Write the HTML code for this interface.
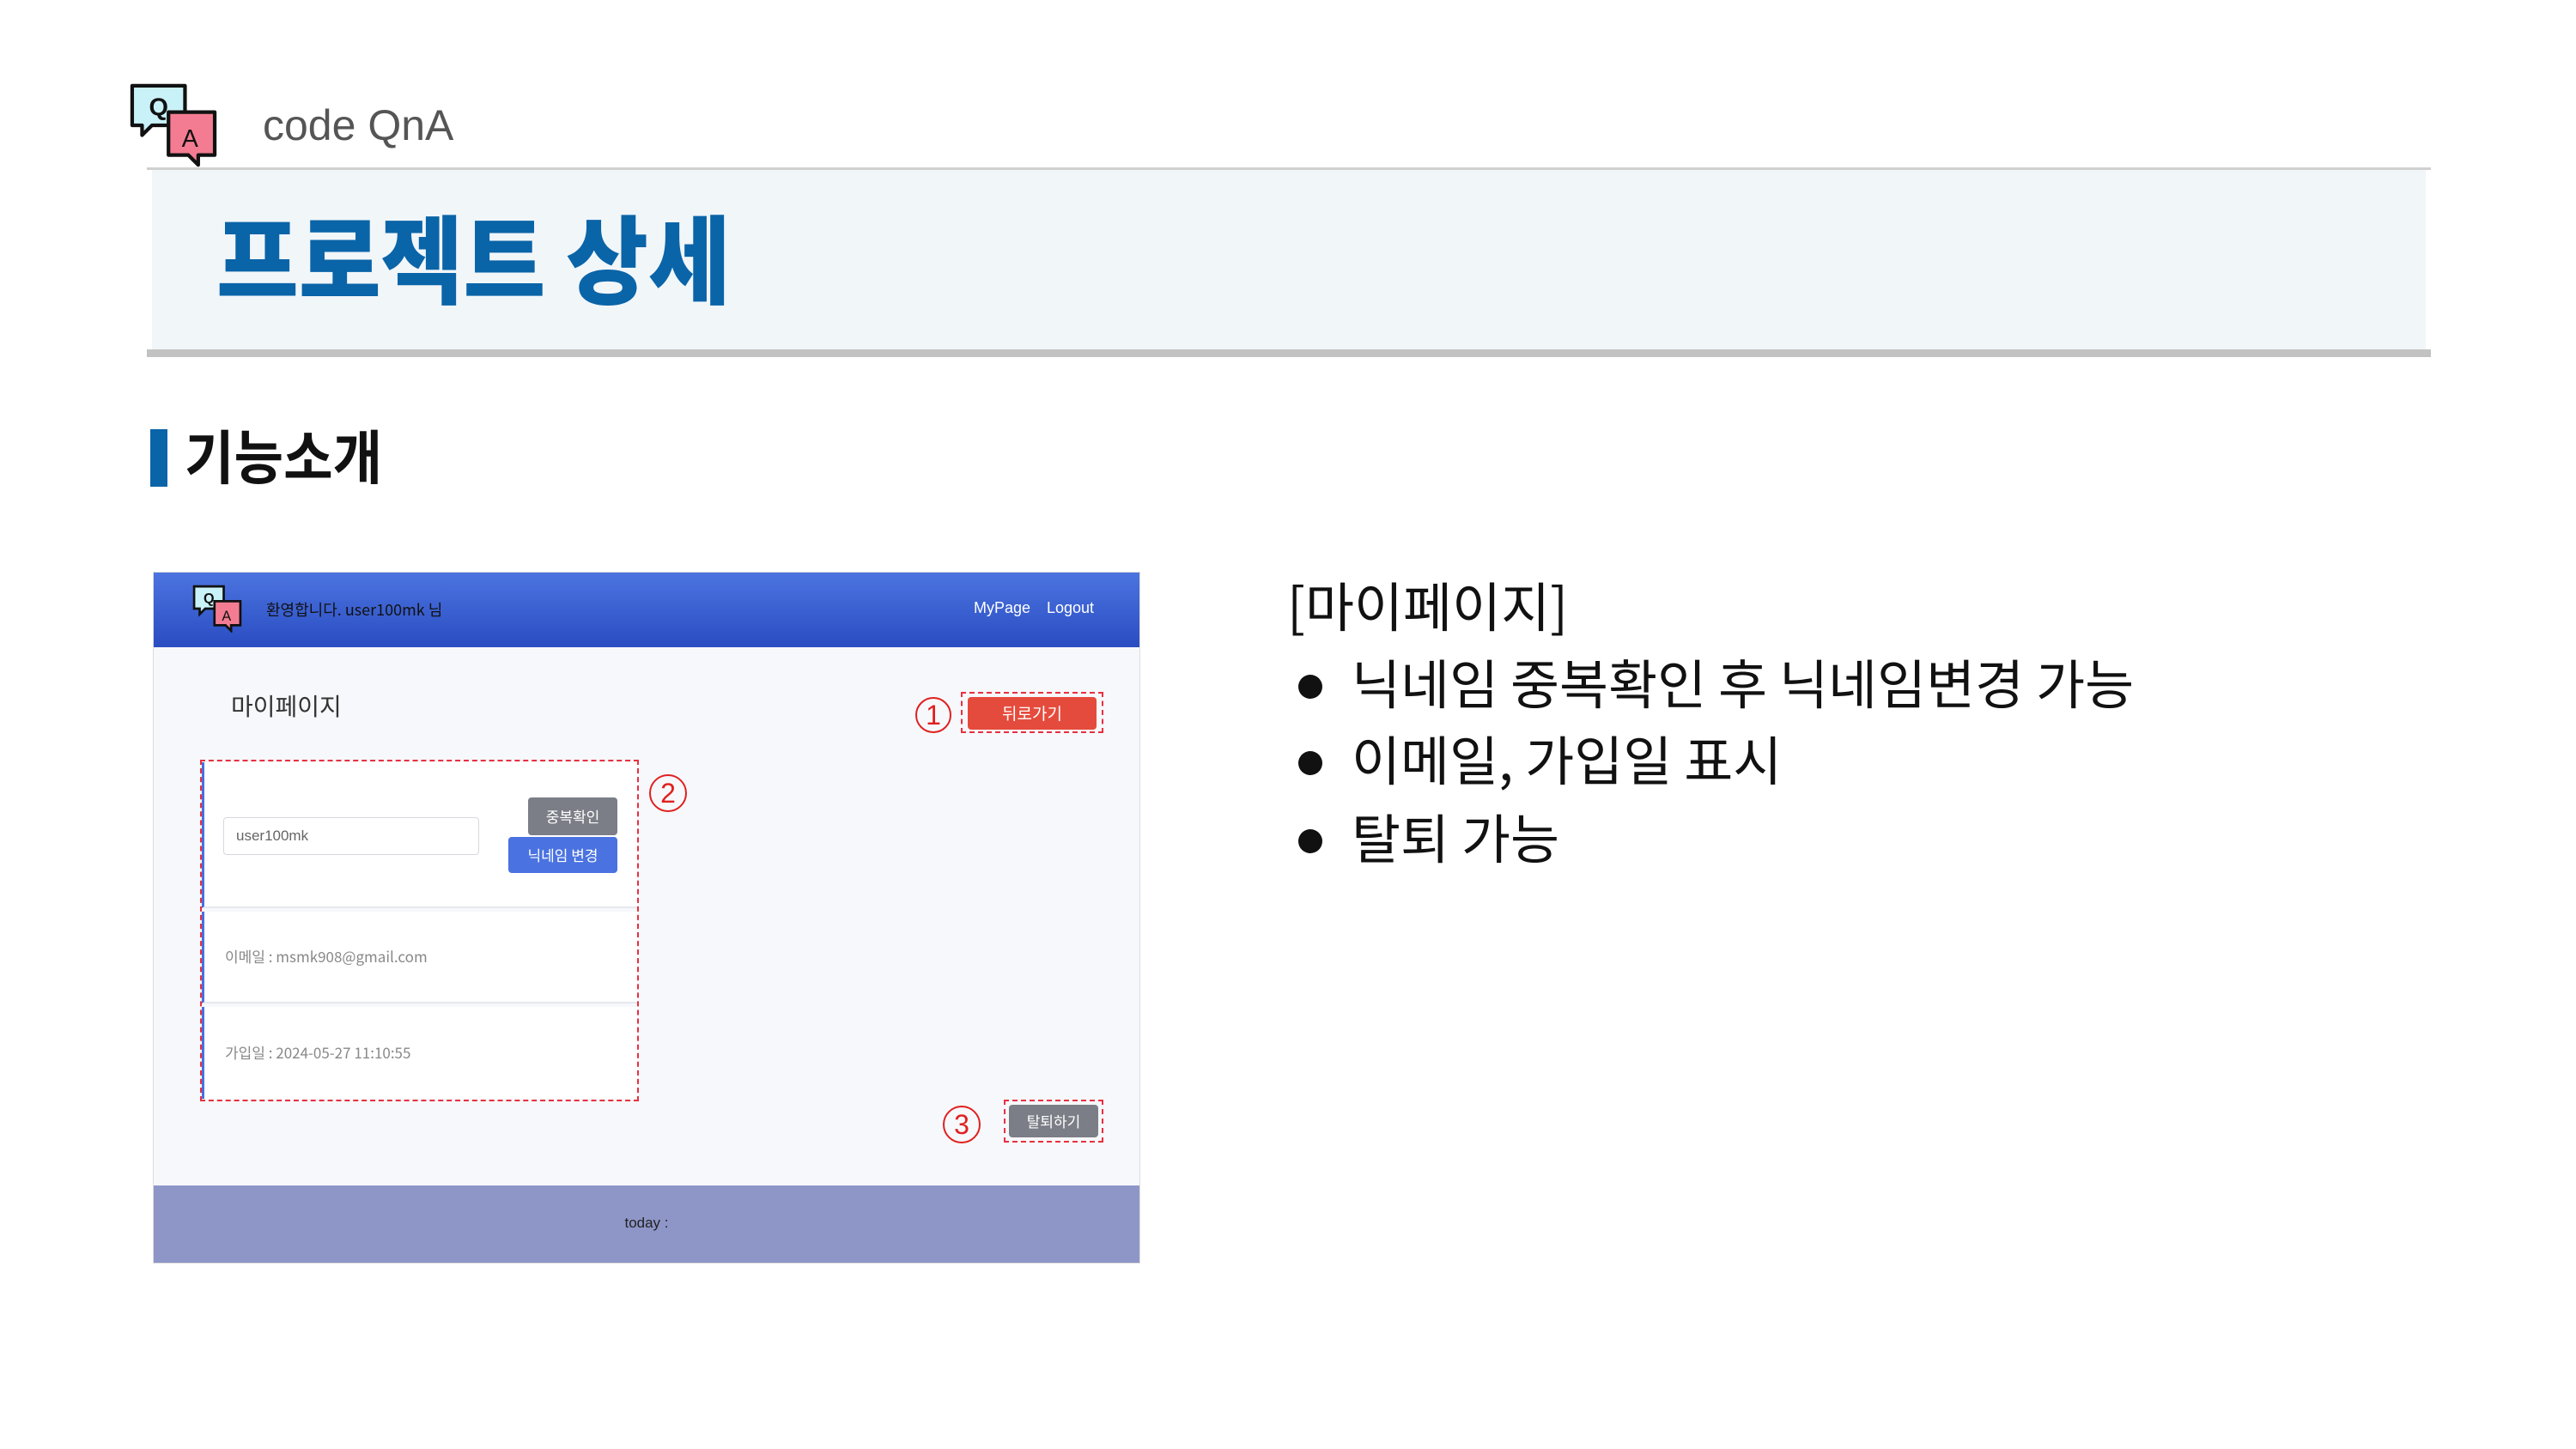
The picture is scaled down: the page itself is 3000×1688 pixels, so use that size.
<!DOCTYPE html>
<html><head><meta charset="utf-8"><style>
*{margin:0;padding:0;box-sizing:border-box}
body{width:3000px;height:1688px;background:#fff;position:relative;overflow:hidden;font-family:"Liberation Sans","Noto Sans CJK KR",sans-serif}
.a{position:absolute;white-space:nowrap}
.k{font-family:"Noto Sans CJK KR","Liberation Sans",sans-serif}
.dot{position:absolute;width:28px;height:28px;border-radius:50%;background:#111}
</style></head><body>
<svg class="a" style="left:150px;top:96px" width="104" height="100" viewBox="0 0 54 52">
<path d="M2 2h32v24H14l-6 6v-6H2z" fill="#c9f2f8" stroke="#111" stroke-width="2.2" stroke-linejoin="round"/>
<text x="18" y="20" font-family="Liberation Sans" font-weight="bold" font-size="15" text-anchor="middle" fill="#111">Q</text>
<path d="M24 18h28v26h-10v6l-6-6H24z" fill="#f47c92" stroke="#111" stroke-width="2.2" stroke-linejoin="round"/>
<text x="37" y="39" font-family="Liberation Sans" font-size="15" text-anchor="middle" fill="#111">A</text>
</svg>
<div class="a" style="left:306px;top:117px;font-size:50px;color:#555">code QnA</div>
<div class="a" style="left:171px;top:195px;width:2660px;height:3px;background:#d0d0d0"></div>
<div class="a" style="left:177px;top:198px;width:2648px;height:210px;background:#f1f6f9"></div>
<div class="a" style="left:171px;top:407px;width:2660px;height:9px;background:#c2c2c2"></div>
<div class="a k" style="left:252px;top:222px;font-size:112px;font-weight:900;color:#0a64a8;line-height:150px;transform:scaleX(0.93);transform-origin:left top">프로젝트 상세</div>
<div class="a" style="left:175px;top:500px;width:20px;height:67px;background:#0a64a8"></div>
<div class="a k" style="left:215px;top:484px;font-size:68px;font-weight:bold;color:#111;line-height:90px;transform:scaleX(0.92);transform-origin:left top">기능소개</div>

<div class="a" style="left:178px;top:666px;width:1150px;height:806px;background:#f7f8fb;border:1px solid #ddd">
 <div class="a" style="left:0;top:0;width:1148px;height:87px;background:linear-gradient(#4c74e0,#2a4dc2)"></div>
 <svg class="a" style="left:44px;top:14px" width="60" height="56" viewBox="0 0 54 52">
 <path d="M2 2h32v24H14l-6 6v-6H2z" fill="#c9f2f8" stroke="#111" stroke-width="2.5"/>
 <text x="18" y="20" font-family="Liberation Sans" font-weight="bold" font-size="15" text-anchor="middle" fill="#111">Q</text>
 <path d="M24 18h28v26h-10v6l-6-6H24z" fill="#f47c92" stroke="#111" stroke-width="2.5"/>
 <text x="37" y="39" font-family="Liberation Sans" font-size="15" text-anchor="middle" fill="#111">A</text>
 </svg>
 <div class="a k" style="left:131px;top:30px;font-size:18px;color:#111">환영합니다. user100mk 님</div>
 <div class="a" style="left:955px;top:31px;font-size:18px;color:#fff">MyPage</div>
 <div class="a" style="left:1040px;top:31px;font-size:18px;color:#fff">Logout</div>
 <div class="a k" style="left:90px;top:135px;font-size:28px;color:#333">마이페이지</div>
 <div class="a" style="left:887px;top:145px;width:42px;height:42px;border:2px solid #e02020;border-radius:50%;color:#e02020;font-size:32px;text-align:center;line-height:38px">1</div>
 <div class="a" style="left:940px;top:139px;width:166px;height:48px;border:2px dashed #e83040"></div>
 <div class="a k" style="left:948px;top:145px;width:150px;height:38px;background:#e54b3c;border-radius:4px;color:#fff;font-size:19px;text-align:center;line-height:38px">뒤로가기</div>
 <div class="a" style="left:54px;top:218px;width:511px;height:398px;border:2px dashed #e83040"></div>
 <div class="a" style="left:56px;top:221px;width:507px;height:170px;background:#fff;border-left:3px solid #4a6fdc;border-bottom:2px solid #e6e8ee"></div>
 <div class="a" style="left:56px;top:395px;width:507px;height:107px;background:#fff;border-left:3px solid #4a6fdc;border-bottom:2px solid #e6e8ee"></div>
 <div class="a" style="left:56px;top:506px;width:507px;height:107px;background:#fff;border-left:3px solid #4a6fdc"></div>
 <div class="a" style="left:81px;top:285px;width:298px;height:44px;border:1px solid #d6d8de;border-radius:4px;background:#fff;font-size:17px;color:#666;padding-left:14px;line-height:42px">user100mk</div>
 <div class="a k" style="left:436px;top:262px;width:104px;height:44px;background:#7b7e86;border-radius:4px;color:#fff;font-size:17px;text-align:center;line-height:44px">중복확인</div>
 <div class="a k" style="left:413px;top:308px;width:127px;height:42px;background:#4a72e0;border-radius:4px;color:#fff;font-size:17px;text-align:center;line-height:42px">닉네임 변경</div>
 <div class="a k" style="left:83px;top:434px;font-size:17px;color:#888">이메일 : msmk908@gmail.com</div>
 <div class="a k" style="left:83px;top:546px;font-size:17px;color:#888">가입일 : 2024-05-27 11:10:55</div>
 <div class="a" style="left:577px;top:235px;width:44px;height:44px;border:2px solid #e02020;border-radius:50%;color:#e02020;font-size:32px;text-align:center;line-height:40px">2</div>
 <div class="a" style="left:919px;top:621px;width:44px;height:44px;border:2px solid #e02020;border-radius:50%;color:#e02020;font-size:32px;text-align:center;line-height:40px">3</div>
 <div class="a" style="left:990px;top:614px;width:116px;height:50px;border:2px dashed #e83040"></div>
 <div class="a k" style="left:996px;top:620px;width:104px;height:38px;background:#7b7e86;border-radius:4px;color:#fff;font-size:17px;text-align:center;line-height:38px">탈퇴하기</div>
 <div class="a" style="left:0;top:714px;width:1148px;height:90px;background:#8e96c8"></div>
 <div class="a" style="left:0;top:748px;width:1148px;text-align:center;font-size:17px;color:#222">today :</div>
</div>

<div class="a k" style="left:1499px;top:658px;font-size:62px;color:#111;line-height:90px">[마이페이지]</div>
<div class="dot" style="left:1512px;top:786px"></div>
<div class="dot" style="left:1512px;top:875px"></div>
<div class="dot" style="left:1512px;top:966px"></div>
<div class="a k" style="left:1574px;top:748px;font-size:62px;color:#111;line-height:90px">닉네임 중복확인 후 닉네임변경 가능</div>
<div class="a k" style="left:1574px;top:837px;font-size:62px;color:#111;line-height:90px">이메일, 가입일 표시</div>
<div class="a k" style="left:1574px;top:928px;font-size:62px;color:#111;line-height:90px">탈퇴 가능</div>
</body></html>
